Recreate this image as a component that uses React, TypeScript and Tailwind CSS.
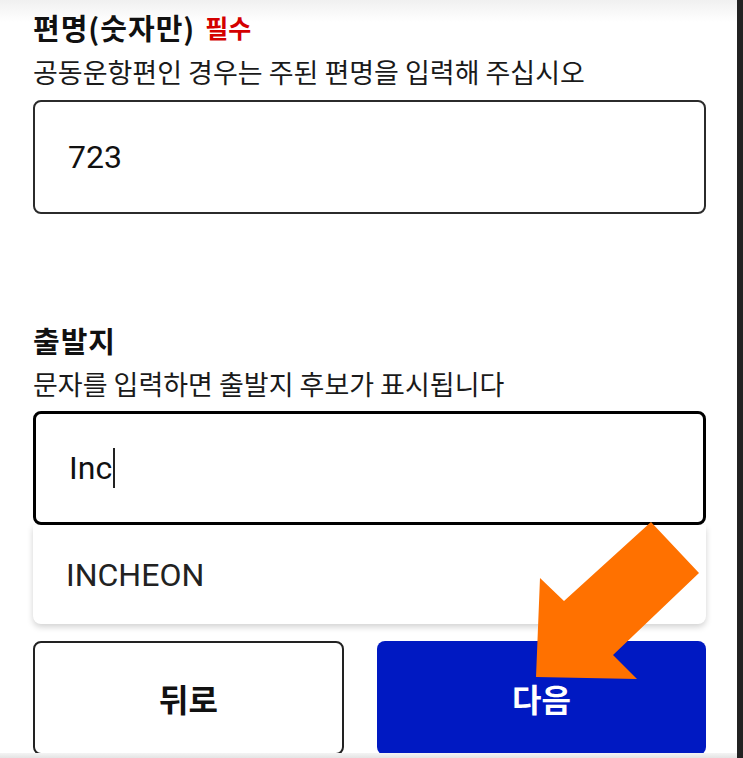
export default function App() {
  const kr = { fontFamily: '"Noto Sans CJK KR", "Noto Sans", sans-serif' };
  const latin = { fontFamily: 'Roboto, "Noto Sans CJK KR", sans-serif' };

  return (
    <div className="relative flex h-[758px] w-[743px] overflow-hidden bg-white">
      {/* main scroll area */}
      <div className="relative flex h-full w-[737px] flex-col">
        <div className="pointer-events-none absolute left-0 top-0 h-[22px] w-full bg-gradient-to-b from-[#f0f0f0] to-white" />

        <div className="relative ml-[33px] flex w-[673px] flex-col">
          {/* flight number */}
          <div className="mt-[8px] flex h-[38px] items-center gap-[10px]" style={kr}>
            <span className="text-[29px] font-bold leading-none tracking-[1px] text-[#111]">편명(숫자만)</span>
            <span className="text-[25px] font-bold leading-none text-[#d40000]">필수</span>
          </div>
          <p className="mt-[8px] h-[36px] text-[27px] leading-[36px] text-[#1a1a1a]" style={kr}>
            공동운항편인 경우는 주된 편명을 입력해 주십시오
          </p>
          <div className="mt-[10px] flex h-[114px] items-center rounded-lg border-2 border-[#2b2b2b] pl-[33px]">
            <span className="text-[32px] text-[#111]" style={latin}>723</span>
          </div>

          {/* departure */}
          <div className="mt-[107px] flex h-[38px] items-center" style={kr}>
            <span className="text-[29px] font-bold leading-none tracking-[1px] text-[#111]">출발지</span>
          </div>
          <p className="mt-[7px] h-[36px] text-[27px] leading-[36px] text-[#1a1a1a]" style={kr}>
            문자를 입력하면 출발지 후보가 표시됩니다
          </p>
          <div className="mt-[9px] flex h-[114px] items-center rounded-lg border-[3px] border-black pl-[33px]">
            <span className="text-[32px] text-[#111]" style={latin}>Inc</span>
            <span className="ml-[1px] h-[40px] w-[2px] bg-[#222]" />
          </div>

          {/* suggestion list */}
          <div className="flex h-[99px] items-center rounded-b-lg bg-white pl-[33px] shadow-[0_3px_6px_rgba(0,0,0,0.18)]">
            <span className="text-[32px] text-[#222]" style={latin}>INCHEON</span>
          </div>

          {/* actions */}
          <div className="mt-[17px] flex gap-[33px]">
            <button
              className="flex h-[114px] w-[311px] items-center justify-center rounded-lg border-2 border-[#222] bg-white text-[32px] font-bold text-[#111]"
              style={kr}
            >
              뒤로
            </button>
            <button
              className="flex h-[114px] flex-1 items-center justify-center rounded-lg bg-[#0019c2] text-[32px] font-bold text-white"
              style={kr}
            >
              다음
            </button>
          </div>
        </div>

        <div className="pointer-events-none absolute bottom-0 left-0 h-[5px] w-full bg-gradient-to-t from-[#e4e4e4] to-[#f4f4f4]" />
      </div>

      {/* right edge strip */}
      <div className="h-full w-[6px] bg-[#222]" />

      {/* annotation arrow */}
      <svg className="pointer-events-none absolute left-0 top-0" width="743" height="758" viewBox="0 0 743 758">
        <polygon
          points="536,677 540,578 564,601 651,522 699,573 613,655 637,679"
          fill="#ff7100"
        />
      </svg>
    </div>
  );
}
